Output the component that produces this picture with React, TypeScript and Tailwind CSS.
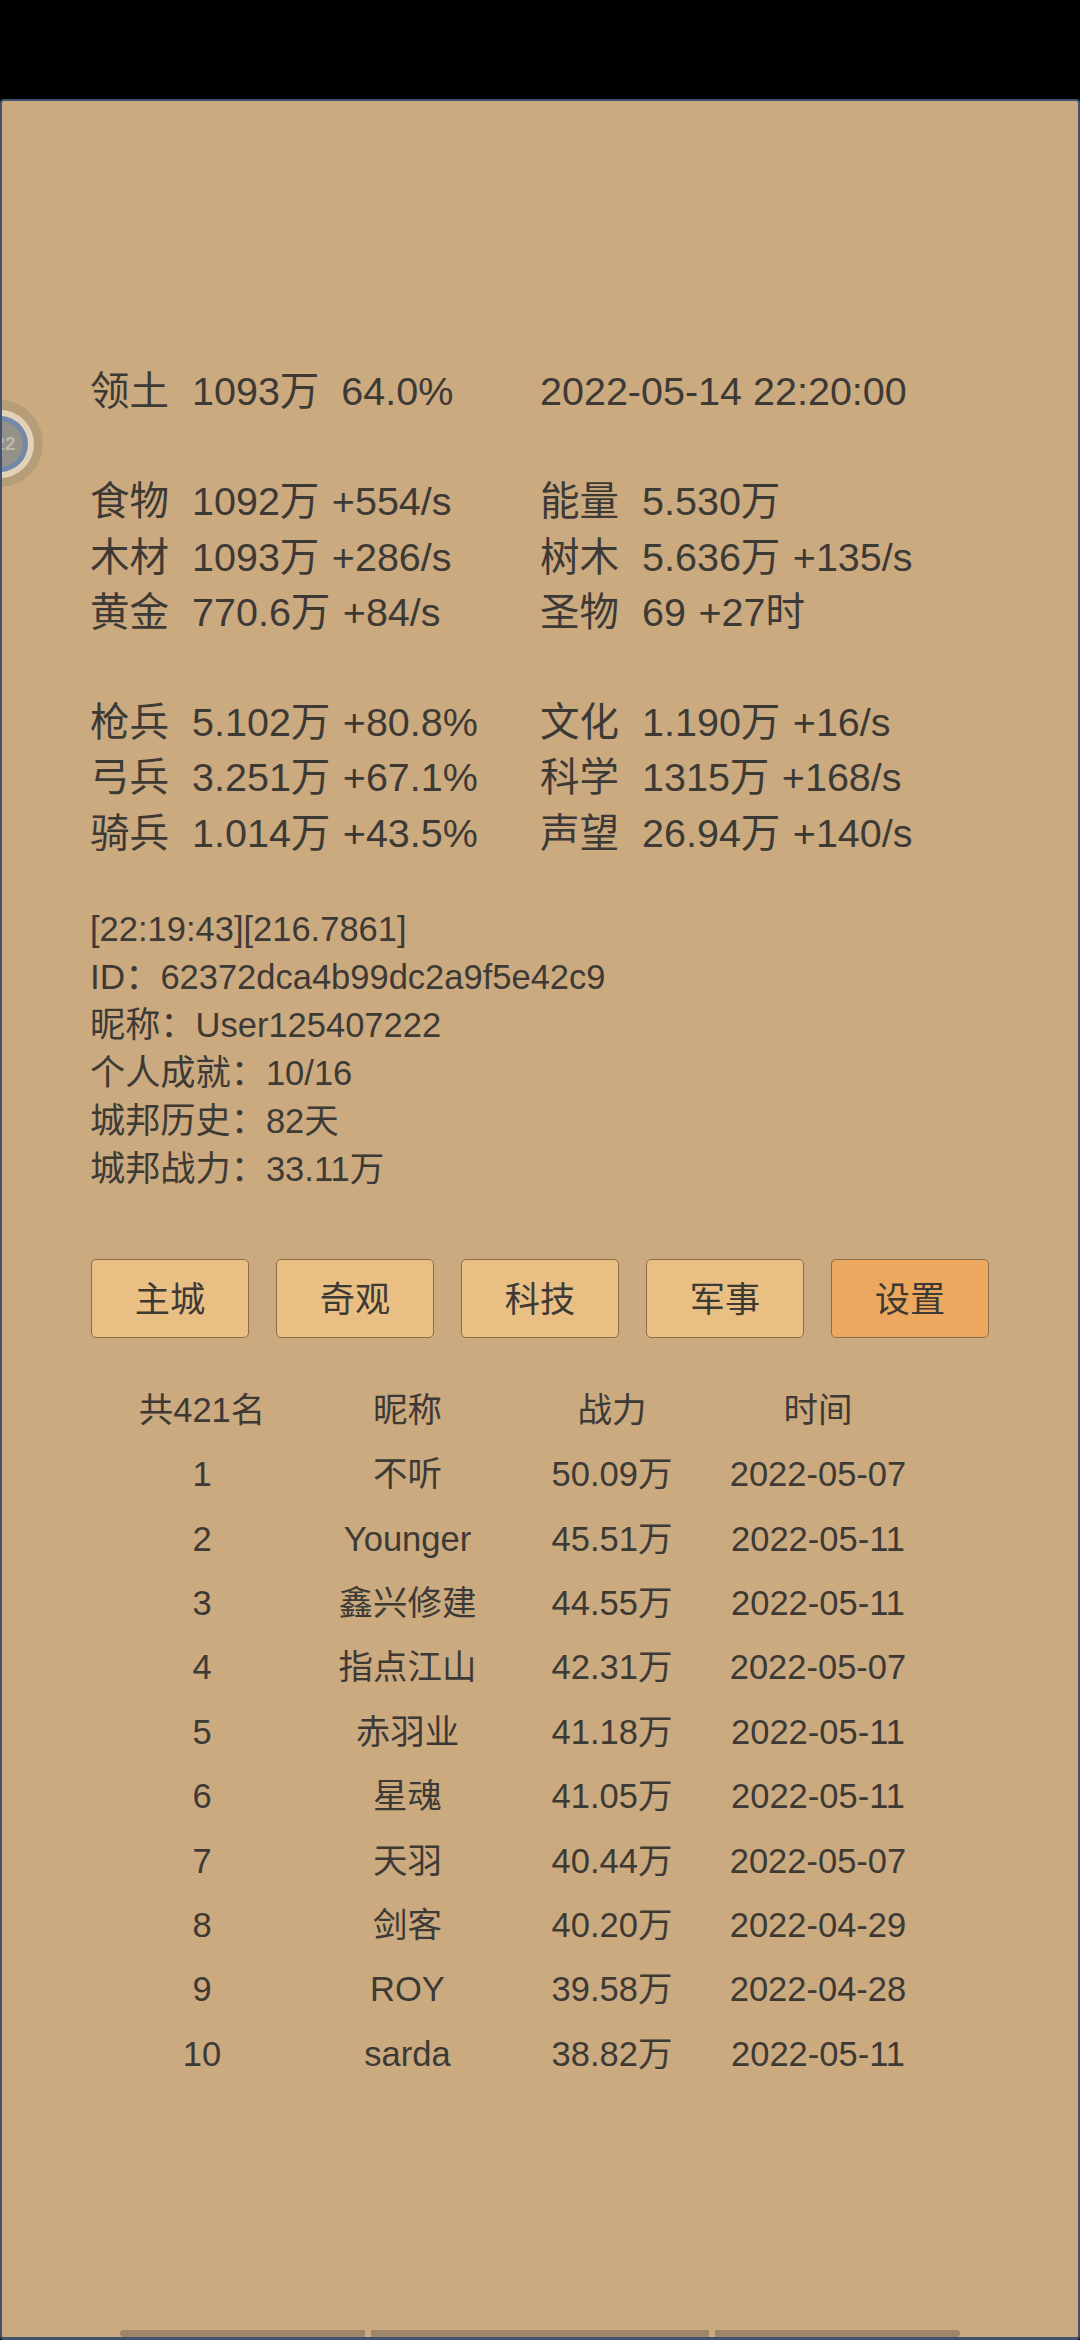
const cjk = "font-['Liberation_Sans','Noto_Sans_CJK_SC',sans-serif]";

const statGroups = [
  [["领土", "1093万  64.0%", "", "2022-05-14 22:20:00"]],
  [
    ["食物", "1092万 +554/s", "能量", "5.530万"],
    ["木材", "1093万 +286/s", "树木", "5.636万 +135/s"],
    ["黄金", "770.6万 +84/s", "圣物", "69 +27时"],
  ],
  [
    ["枪兵", "5.102万 +80.8%", "文化", "1.190万 +16/s"],
    ["弓兵", "3.251万 +67.1%", "科学", "1315万 +168/s"],
    ["骑兵", "1.014万 +43.5%", "声望", "26.94万 +140/s"],
  ],
];

const info = [
  ["", "[22:19:43][216.7861]"],
  ["ID：", "62372dca4b99dc2a9f5e42c9"],
  ["昵称：", "User125407222"],
  ["个人成就：", "10/16"],
  ["城邦历史：", "82天"],
  ["城邦战力：", "33.11万"],
];

const tabs = ["主城", "奇观", "科技", "军事", "设置"];

const ranking = [
  ["共421名", "昵称", "战力", "时间"],
  ["1", "不听", "50.09万", "2022-05-07"],
  ["2", "Younger", "45.51万", "2022-05-11"],
  ["3", "鑫兴修建", "44.55万", "2022-05-11"],
  ["4", "指点江山", "42.31万", "2022-05-07"],
  ["5", "赤羽业", "41.18万", "2022-05-11"],
  ["6", "星魂", "41.05万", "2022-05-11"],
  ["7", "天羽", "40.44万", "2022-05-07"],
  ["8", "剑客", "40.20万", "2022-04-29"],
  ["9", "ROY", "39.58万", "2022-04-28"],
  ["10", "sarda", "38.82万", "2022-05-11"],
];

export default function App() {
  return (
    <div className={`h-[2340px] w-[1080px] overflow-hidden bg-black pt-[99px] text-[#3d3a36] ${cjk}`}>
      <div className="relative h-[2241px] overflow-hidden rounded-[4px] border-2 border-b-[3px] border-[#43536f] bg-[#cbaa80] pl-[88px] pt-[263px]">
        {/* floating button stuck to the left edge */}
        <div className="absolute left-[-46px] top-[299px] flex h-[87px] w-[87px] items-center justify-center rounded-full bg-[#b59e77]">
          <div className="flex h-[68px] w-[68px] items-center justify-center rounded-full bg-[#e2d2b8]">
            <div className="flex h-[56px] w-[56px] items-center justify-center rounded-full bg-[#7189a6]">
              <div className="flex h-[46px] w-[46px] items-center justify-end rounded-full bg-[#94918a] pr-[7px] text-[19px] font-bold leading-none text-[#bdb8aa]">
                22
              </div>
            </div>
          </div>
        </div>

        <div className="flex flex-col gap-[55.2px] text-[39.5px] leading-[55.2px]">
          {statGroups.map((group, i) => (
            <div key={i}>
              {group.map((row) => (
                <div key={row[0]} className="grid grid-cols-[450px_1fr] whitespace-pre">
                  <div className="flex">
                    <span className="w-[102px]">{row[0]}</span>
                    <span className={row[2] ? "[word-spacing:1.5px]" : ""}>{row[1]}</span>
                  </div>
                  {row[2] ? (
                    <div className="flex">
                      <span className="w-[102px]">{row[2]}</span>
                      <span className="[word-spacing:1.5px]">{row[3]}</span>
                    </div>
                  ) : (
                    <span>{row[3]}</span>
                  )}
                </div>
              ))}
            </div>
          ))}
        </div>

        <div className="mt-[44px] text-[34.5px] leading-[48px]">
          {info.map((line) => (
            <div key={line[1]}>
              <span className="text-[35.2px]">{line[0]}</span>
              {line[1]}
            </div>
          ))}
        </div>

        <div className="mt-[66px] ml-px flex gap-[27px]">
          {tabs.map((tab) => (
            <button
              key={tab}
              className={`h-[79px] w-[158px] rounded-[5px] border border-[#8a6c46] pt-[5px] text-[35.2px] ${
                tab === "设置" ? "bg-[#eca85f]" : "bg-[#e9bf84]"
              }`}
            >
              {tab}
            </button>
          ))}
        </div>

        <div className="mt-[40px] text-[34.5px] leading-[64.4px]">
          {ranking.map((row) => (
            <div key={row[0]} className="grid grid-cols-[224px_187px_222px_190px] text-center">
              {row.map((cell, i) => (
                <span key={i} className="whitespace-nowrap">
                  {cell}
                </span>
              ))}
            </div>
          ))}
        </div>

        {/* scroll indicator */}
        <div className="absolute bottom-0 left-[118px] flex h-[7px] gap-[6px]">
          <div className="h-full w-[245px] rounded-l-full bg-[#9e8768]" />
          <div className="h-full w-[338px] bg-[#9e8768]" />
          <div className="h-full w-[245px] rounded-r-full bg-[#9e8768]" />
        </div>
      </div>
    </div>
  );
}
